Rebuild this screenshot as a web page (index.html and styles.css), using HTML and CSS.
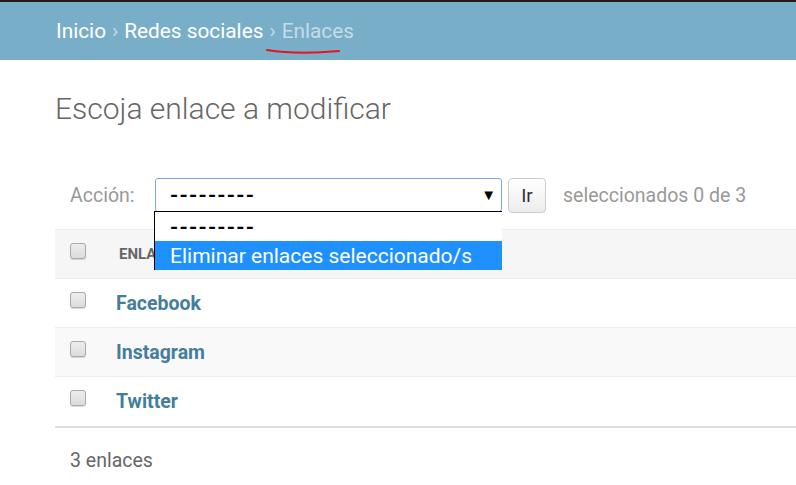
FILE: index.html
```html
<!DOCTYPE html>
<html lang="es">
<head>
<meta charset="utf-8">
<title>Escoja enlace a modificar</title>
<link rel="stylesheet" href="styles.css">
</head>
<body>
<div class="topline"></div>
<div class="breadcrumbs">
  <a class="crumb">Inicio</a><span class="sep">›</span><a class="crumb">Redes sociales</a><span class="sep">›</span><span class="current">Enlaces</span>
  <svg class="scribble" width="80" height="10" viewBox="0 0 80 10"><path d="M1 3 C 20 6, 40 7, 73 4" fill="none" stroke="#e8141c" stroke-width="2" stroke-linecap="round"/></svg>
</div>
<div class="content">
  <h1>Escoja enlace a modificar</h1>
  <div class="actions">
    <label class="label">Acción:</label>
    <div class="select-wrap">
      <div class="select"><span class="dashes">---------</span><span class="arrow">▼</span></div>
      <div class="dropdown">
        <div class="option"><span class="dashes">---------</span></div>
        <div class="option selected">Eliminar enlaces seleccionado/s</div>
      </div>
    </div>
    <button class="go">Ir</button>
    <span class="counter">seleccionados 0 de 3</span>
  </div>
  <table class="results">
    <thead>
      <tr><th class="cb"><span class="check"></span></th><th class="col">Enlace</th></tr>
    </thead>
    <tbody>
      <tr><td class="cb"><span class="check"></span></td><td><a class="link">Facebook</a></td></tr>
      <tr class="alt"><td class="cb"><span class="check"></span></td><td><a class="link">Instagram</a></td></tr>
      <tr class="last"><td class="cb"><span class="check"></span></td><td><a class="link">Twitter</a></td></tr>
    </tbody>
  </table>
  <p class="paginator">3 enlaces</p>
</div>
</body>
</html>
```
FILE: styles.css
```css
html, body { margin: 0; padding: 0; background: #fff; }
body { font-family: Roboto, "Liberation Sans", sans-serif; color: #333; overflow: hidden; }
.topline { height: 2px; background: #231a1b; }
.breadcrumbs {
  position: relative;
  background: #79aec8;
  height: 58px;
  box-sizing: border-box;
  padding: 16px 0 0 56px;
  font-size: 20.8px;
  line-height: 26px;
  color: #c4dce8;
}
.crumb { color: #fff; }
.sep { margin: 0 6px; color: #c4dce8; }
.current { color: #c4dce8; }
.scribble { position: absolute; left: 266px; top: 45px; }
.content { padding: 0 0 0 55px; }
h1 {
  margin: 0;
  padding-top: 29px;
  font-weight: 300;
  font-size: 30px;
  line-height: 40px;
  color: #666;
}
.actions {
  display: flex;
  align-items: center;
  margin-top: 49px;
  padding-left: 15px;
  height: 34px;
  font-size: 19.5px;
  color: #999;
}
.label { width: 85px; }
.select-wrap { position: relative; }
.select {
  width: 347px;
  height: 34px;
  box-sizing: border-box;
  border: 1px solid #7fa6e4;
  border-radius: 3px;
  display: flex;
  align-items: center;
  justify-content: space-between;
  padding: 0 5px 0 14px;
  font-size: 21px;
  color: #000;
  background: #fff;
}
.dashes { letter-spacing: 1.2px; font-weight: 700; }
.arrow { font-size: 15px; }
.dropdown {
  position: absolute;
  left: -1px;
  top: 33px;
  width: 347px;
  background: #fff;
  border-top: 1px solid #000;
  border-left: 1px solid #000;
  font-size: 21px;
  color: #000;
  z-index: 5;
}
.option { height: 29px; line-height: 31px; padding-left: 15px; }
.option.selected { background: #1e90ff; color: #fff; }
.go {
  margin-left: 6px;
  width: 38px;
  height: 35px;
  border: 1px solid #ccc;
  border-radius: 4px;
  background: linear-gradient(#fff, #ececec);
  font-family: inherit;
  font-size: 19px;
  color: #333;
  padding: 0;
}
.counter { margin-left: 17px; }
.results {
  width: 100%;
  margin-top: 17px;
  border-collapse: collapse;
  border-bottom: 2px solid #ddd;
}
.results th, .results td {
  height: 48px;
  padding: 0;
  border-top: 1px solid #eee;
  text-align: left;
  vertical-align: middle;
}
.results tr.last td { height: 49px; }
.results thead th { background: #f6f6f6; }
.results td.cb, .results th.cb { width: 61px; padding-left: 15px; vertical-align: top; padding-top: 13px; box-sizing: border-box; }
.results th.col {
  font-size: 15px;
  font-weight: 700;
  color: #666;
  text-transform: uppercase;
  padding-left: 3px;
}
.results tr.alt td { background: #f9f9f9; }
.check {
  display: block;
  width: 14px;
  height: 14px;
  border: 1px solid #aaa;
  border-radius: 3px;
  background: linear-gradient(#ededed, #dcdcdc);
  box-shadow: 0 1px 1px rgba(0,0,0,0.15);
}
.link { font-size: 19.5px; font-weight: 700; color: #447e9b; }
.paginator { margin: 21px 0 0 15px; font-size: 19.5px; color: #666; }
```
